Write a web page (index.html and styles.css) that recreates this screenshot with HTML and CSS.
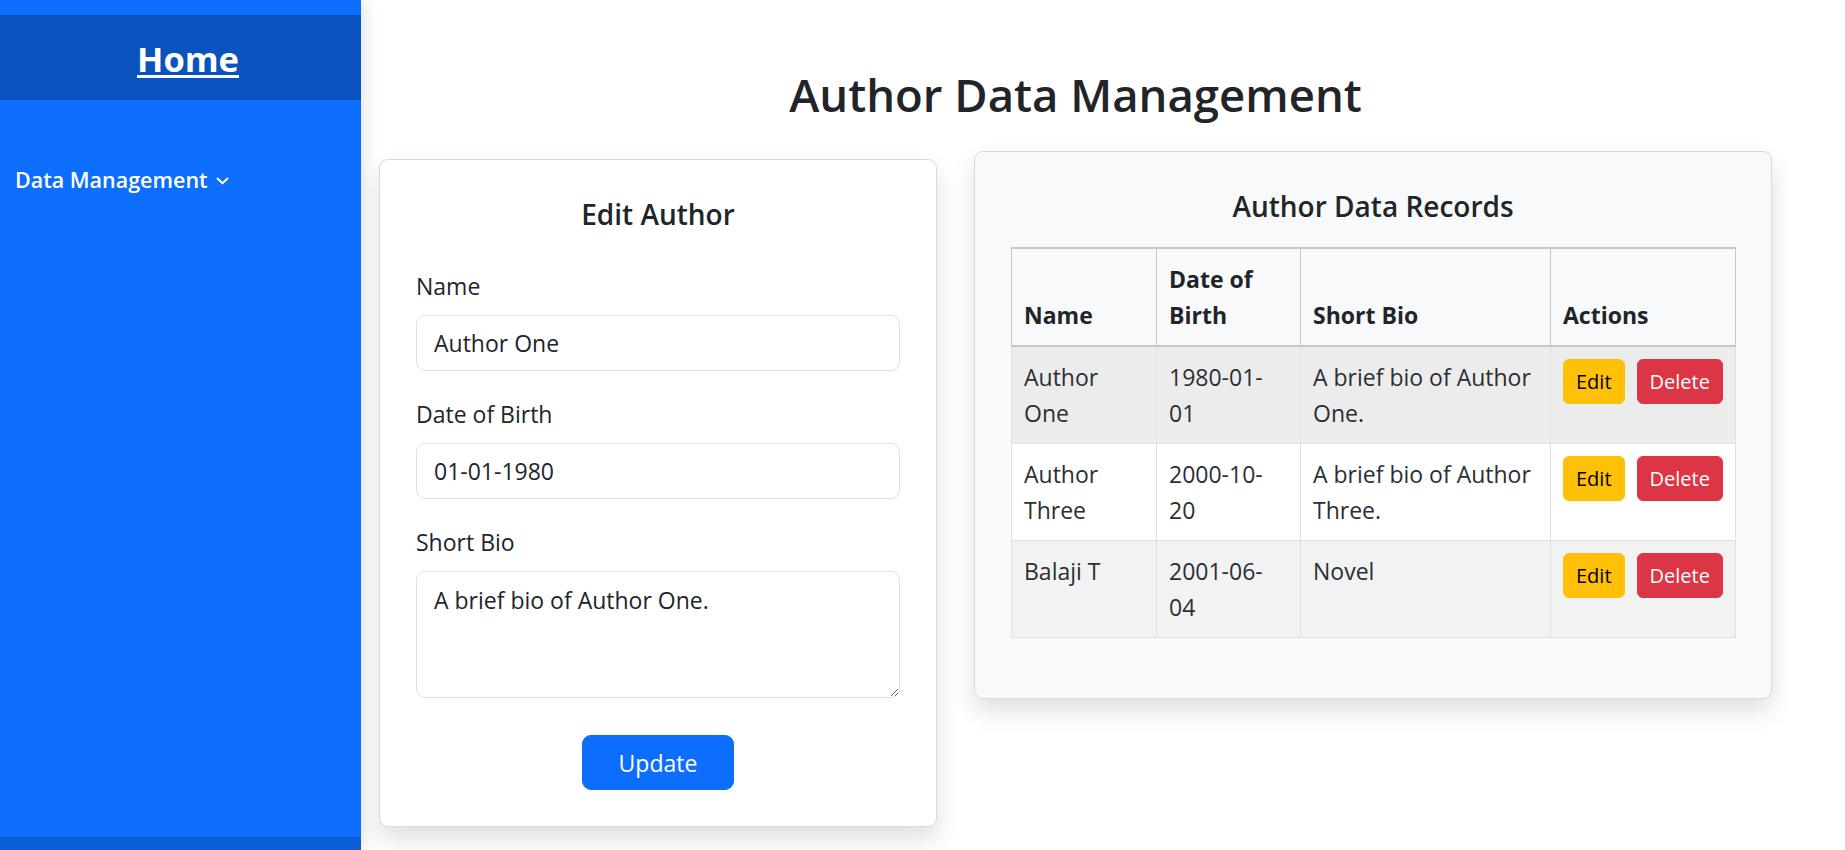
FILE: index.html
```html
<!DOCTYPE html>
<html lang="en">
<head>
<meta charset="utf-8">
<title>Author Data Management</title>
<link rel="stylesheet" href="styles.css">
</head>
<body>
<div class="layout">
  <aside class="sidebar">
    <div class="sidebar-top"></div>
    <div class="brand"><a href="#" class="brand-link">Home</a></div>
    <nav class="nav">
      <a href="#" class="nav-item">Data Management
        <svg class="chev" width="13" height="8" viewBox="0 0 13 8"><polyline points="1.5,1.5 6.5,6.2 11.5,1.5" fill="none" stroke="#fff" stroke-width="2" stroke-linecap="round" stroke-linejoin="round"/></svg>
      </a>
    </nav>
    <div class="sidebar-bottom"></div>
  </aside>
  <main class="main">
    <div class="wrap">
      <h2 class="page-title">Author Data Management</h2>
      <div class="panels">
        <section class="card form-card">
          <h4 class="card-title">Edit Author</h4>
          <form class="form">
            <div class="field">
              <label class="label">Name</label>
              <input class="control" type="text" value="Author One">
            </div>
            <div class="field">
              <label class="label">Date of Birth</label>
              <input class="control" type="text" value="01-01-1980">
            </div>
            <div class="field field-last">
              <label class="label">Short Bio</label>
              <textarea class="control textarea">A brief bio of Author One.</textarea>
            </div>
            <div class="form-actions">
              <button type="button" class="btn btn-primary">Update</button>
            </div>
          </form>
        </section>
        <section class="card table-card">
          <h4 class="card-title">Author Data Records</h4>
          <table class="table">
            <colgroup>
              <col class="c-name"><col class="c-dob"><col class="c-bio"><col class="c-act">
            </colgroup>
            <thead>
              <tr><th>Name</th><th>Date of Birth</th><th>Short Bio</th><th>Actions</th></tr>
            </thead>
            <tbody>
              <tr class="row-hover">
                <td>Author One</td><td class="dob">1980-01-01</td><td>A brief bio of Author One.</td>
                <td class="actions"><button class="btn-sm btn-warning">Edit</button><button class="btn-sm btn-danger">Delete</button></td>
              </tr>
              <tr>
                <td>Author Three</td><td class="dob">2000-10-20</td><td>A brief bio of Author Three.</td>
                <td class="actions"><button class="btn-sm btn-warning">Edit</button><button class="btn-sm btn-danger">Delete</button></td>
              </tr>
              <tr class="row-striped">
                <td>Balaji T</td><td class="dob">2001-06-04</td><td>Novel</td>
                <td class="actions"><button class="btn-sm btn-warning">Edit</button><button class="btn-sm btn-danger">Delete</button></td>
              </tr>
            </tbody>
          </table>
        </section>
      </div>
    </div>
  </main>
</div>
</body>
</html>
```
FILE: styles.css
```css
* { box-sizing: border-box; }
html, body { margin: 0; padding: 0; }
body {
  font-family: "Open Sans", "Noto Sans", sans-serif;
  color: #212529;
  background: #fff;
  font-size: 23px;
  line-height: 36px;
}
.layout {
  display: flex;
  height: 850px;
  overflow: hidden;
}
.sidebar {
  width: 361px;
  flex: 0 0 361px;
  background: #0d6efd;
  display: flex;
  flex-direction: column;
  position: relative;
  z-index: 2;
  box-shadow: 2px 0 16px rgba(0,0,0,0.13);
}
.sidebar-top { height: 15px; }
.brand {
  height: 85px;
  background: #0a53be;
  text-align: center;
  padding-top: 24px;
  padding-left: 15px;
}
.brand-link {
  color: #fff;
  font-weight: 700;
  font-size: 34.5px;
  line-height: 40px;
  text-decoration: underline;
  text-decoration-thickness: 3px;
  text-underline-offset: 3px;
}
.nav {
  flex: 1;
  padding: 61px 0 0 15px;
}
.nav-item {
  color: #fff;
  text-decoration: none;
  font-weight: 600;
  font-size: 21.5px;
  line-height: 30px;
  display: inline-flex;
  align-items: center;
  gap: 8px;
}
.chev { margin-top: 2px; }
.sidebar-bottom {
  height: 13px;
  background: #0b5ed7;
}
.main {
  flex: 1;
  padding: 0 18px;
}
.wrap { width: 1393px; }
.page-title {
  margin: 0;
  padding-top: 66px;
  font-size: 45.5px;
  line-height: 56px;
  font-weight: 600;
  text-align: center;
  color: #212529;
}
.panels {
  display: flex;
  align-items: flex-start;
  gap: 37px;
  margin-top: 29px;
}
.card {
  border: 1px solid #d9dadb;
  border-radius: 9px;
  padding: 36px;
  box-shadow: 0 12px 24px rgba(0,0,0,0.13);
}
.form-card {
  width: 558px;
  background: #fff;
  margin-top: 8px;
}
.table-card {
  width: 798px;
  background: #f8f9fa;
}
.card-title {
  margin: 0;
  font-size: 28px;
  line-height: 36px;
  font-weight: 600;
  text-align: center;
}
.form-card .card-title { margin-bottom: 36px; }
.table-card .card-title { margin-bottom: 23px; }
.form { margin: 0; }
.field { margin-bottom: 25px; }
.field-last { margin-bottom: 37px; }
.label {
  display: block;
  margin-bottom: 11px;
  font-size: 23px;
  line-height: 36px;
}
.control {
  display: block;
  width: 100%;
  height: 56px;
  padding: 0 17px;
  font-family: inherit;
  font-size: 23px;
  line-height: 36px;
  color: #212529;
  background: #fff;
  border: 1px solid #dee2e6;
  border-radius: 9px;
  outline: none;
}
.textarea {
  height: 127px;
  padding: 10px 17px;
  resize: vertical;
}
.form-actions { text-align: center; }
.btn {
  font-family: inherit;
  font-size: 23px;
  line-height: 36px;
  height: 55px;
  padding: 0 36px;
  border-radius: 9px;
  border: 1px solid #0d6efd;
  cursor: pointer;
}
.btn-primary { background: #0d6efd; color: #fff; }
.table {
  width: 724px;
  table-layout: fixed;
  border-collapse: collapse;
  margin-bottom: 24px;
  background: #fff;
}
.c-name { width: 145px; }
.c-dob { width: 144px; }
.c-bio { width: 250px; }
.c-act { width: 185px; }
.table th, .table td {
  padding: 12px;
  text-align: left;
  border: 1px solid #dee2e6;
  font-size: 23px;
  line-height: 36px;
}
.table thead th {
  background: #f8f9fa;
  font-weight: 700;
  vertical-align: bottom;
  border-color: #c6c7c8;
  border-top-width: 2px;
  border-bottom-width: 2px;
}
.table td { vertical-align: top; color: #2b2f33; }
.table td.dob { padding-right: 20px; }
.row-hover td { background: #ececec; }
.row-striped td { background: #f2f2f2; }
.actions { white-space: nowrap; }
.btn-sm {
  font-family: inherit;
  font-size: 20px;
  line-height: 31px;
  height: 45px;
  padding: 0 12px;
  border-radius: 6px;
  border: 1px solid transparent;
  vertical-align: top;
  cursor: pointer;
}
.btn-warning { background: #ffc107; border-color: #ffc107; color: #000; margin-right: 12px; }
.btn-danger { background: #dc3545; border-color: #dc3545; color: #fff; }
```
